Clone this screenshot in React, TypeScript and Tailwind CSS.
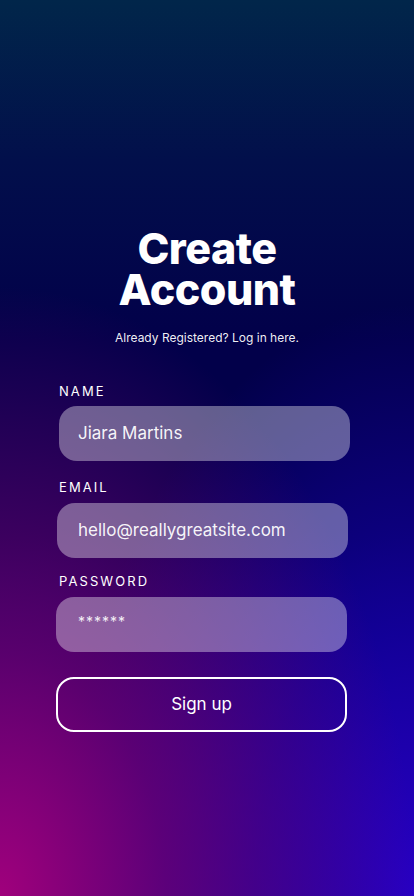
export default function App() {
  const font = { fontFamily: 'Inter, "Noto Sans", sans-serif' };
  return (
    <div
      style={font}
      className="relative w-full min-h-[896px] overflow-hidden bg-[radial-gradient(ellipse_100%_68%_at_0%_100%,#a0007c_0%,rgba(115,0,115,0.75)_40%,rgba(90,0,110,0)_100%),radial-gradient(ellipse_85%_66%_at_100%_100%,#2800c2_0%,rgba(22,0,172,0.75)_45%,rgba(10,0,140,0)_100%),linear-gradient(to_bottom,#01264a_0%,#020f4b_18%,#02004a_38%,#02004a_60%,#1a0080_100%)] text-white"
    >
      <div className="flex flex-col items-center pt-[228px]">
        <h1 className="text-[43px] leading-[41px] font-extrabold text-center tracking-[-0.5px]">
          <span className="block">Create</span>
          <span className="block">Account</span>
        </h1>
        <p className="mt-[20px] text-[12px] leading-[16px] text-white/95">
          Already Registered? Log in here.
        </p>
      </div>

      <form className="mt-[37px] flex flex-col" onSubmit={(e) => e.preventDefault()}>
        <label className="ml-[59px] text-[13px] leading-[16px] tracking-[0.16em]">NAME</label>
        <div className="ml-[59px] mt-[7px] w-[291px] h-[55px] rounded-[18px] bg-white/[0.37] flex items-center pl-[19px] text-[17px] text-white/95">
          Jiara Martins
        </div>

        <label className="ml-[59px] mt-[18px] text-[13px] leading-[16px] tracking-[0.16em]">EMAIL</label>
        <div className="ml-[57px] mt-[8px] w-[291px] h-[55px] rounded-[18px] bg-white/[0.37] flex items-center pl-[21px] text-[17px] text-white/95">
          hello@reallygreatsite.com
        </div>

        <label className="ml-[59px] mt-[15px] text-[13px] leading-[16px] tracking-[0.16em]">PASSWORD</label>
        <div className="ml-[56px] mt-[8px] w-[291px] h-[55px] rounded-[18px] bg-white/[0.37] flex items-center pl-[22px] pb-[6px] text-[14px] tracking-[1px] text-white/90">
          ******
        </div>

        <button
          type="submit"
          className="ml-[56px] mt-[25px] w-[291px] h-[55px] rounded-[18px] border-2 border-white flex items-center justify-center text-[17px] text-white"
        >
          Sign up
        </button>
      </form>
    </div>
  );
}
